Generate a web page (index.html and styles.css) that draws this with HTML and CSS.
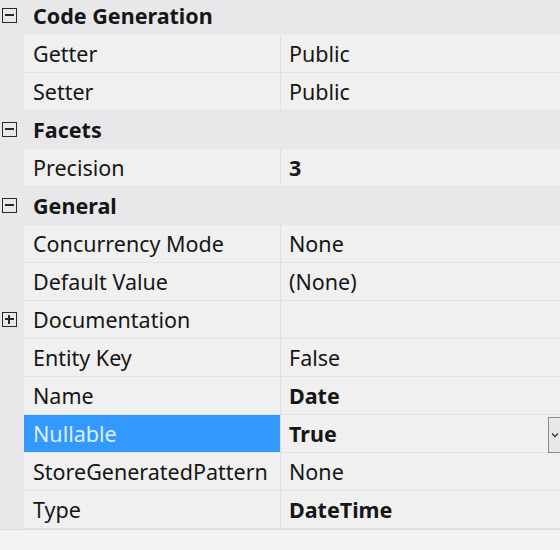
FILE: index.html
```html
<!DOCTYPE html>
<html>
<head>
<meta charset="utf-8">
<link rel="stylesheet" href="styles.css">
</head>
<body>
<div class="grid">
  <div class="row cat"><span class="gut"><span class="box"></span></span><span class="cat-label">Code Generation</span></div>
  <div class="row"><span class="gut"></span><span class="name">Getter</span><span class="val">Public</span></div>
  <div class="row"><span class="gut"></span><span class="name">Setter</span><span class="val">Public</span></div>
  <div class="row cat"><span class="gut"><span class="box"></span></span><span class="cat-label">Facets</span></div>
  <div class="row"><span class="gut"></span><span class="name">Precision</span><span class="val bold">3</span></div>
  <div class="row cat"><span class="gut"><span class="box"></span></span><span class="cat-label">General</span></div>
  <div class="row"><span class="gut"></span><span class="name">Concurrency Mode</span><span class="val">None</span></div>
  <div class="row"><span class="gut"></span><span class="name">Default Value</span><span class="val">(None)</span></div>
  <div class="row"><span class="gut"><span class="box plus"></span></span><span class="name">Documentation</span><span class="val"></span></div>
  <div class="row"><span class="gut"></span><span class="name">Entity Key</span><span class="val">False</span></div>
  <div class="row"><span class="gut"></span><span class="name">Name</span><span class="val bold">Date</span></div>
  <div class="row selected"><span class="gut"></span><span class="name">Nullable</span><span class="val bold">True</span><span class="drop"><svg width="12" height="10" viewBox="0 0 12 10"><path d="M3 3.5 L6 6.5 L9 3.5" fill="none" stroke="#333" stroke-width="1.3"/></svg></span></div>
  <div class="row"><span class="gut"></span><span class="name">StoreGeneratedPattern</span><span class="val">None</span></div>
  <div class="row"><span class="gut"></span><span class="name">Type</span><span class="val bold">DateTime</span></div>
</div>
</body>
</html>
```
FILE: styles.css
```css
html, body {
  margin: 0;
  padding: 0;
  background: #f3f3f4;
}
body {
  width: 560px;
  height: 550px;
  overflow: hidden;
  font-family: "Noto Sans", "Open Sans", sans-serif;
  font-size: 21.5px;
  color: #161616;
}
.grid {
  margin-top: -3px;
  border-bottom: 1px solid #dcdcdf;
}
.row {
  height: 38px;
  display: flex;
  align-items: stretch;
  position: relative;
  background: #f0f0f1;
}
.gut {
  width: 24px;
  flex: none;
  background: #e8e8eb;
  display: flex;
  align-items: center;
}
.cat {
  background: #e8e8eb;
}
.cat-label {
  font-weight: bold;
  padding-left: 9px;
  padding-bottom: 2px;
  display: flex;
  align-items: center;
}
.box {
  width: 15px;
  height: 15px;
  border: 1.5px solid #2a2a2a;
  box-sizing: border-box;
  margin-left: 2px;
  margin-bottom: 1px;
  position: relative;
  flex: none;
}
.box::before {
  content: "";
  position: absolute;
  left: 2px;
  right: 2px;
  top: 5px;
  height: 1.5px;
  background: #2a2a2a;
}
.plus::after {
  content: "";
  position: absolute;
  top: 2px;
  bottom: 2px;
  left: 5px;
  width: 1.5px;
  background: #2a2a2a;
}
.row:not(.cat) .name,
.row:not(.cat) .val {
  box-shadow: inset 0 -1px 0 #e3e3e5;
}
.name {
  width: 257px;
  flex: none;
  box-sizing: border-box;
  padding-left: 9px;
  padding-bottom: 2px;
  display: flex;
  align-items: center;
  border-right: 1px solid #e1e1e4;
  white-space: nowrap;
}
.val {
  flex: 1;
  padding-left: 8px;
  padding-bottom: 2px;
  white-space: nowrap;
  display: flex;
  align-items: center;
}
.bold {
  font-weight: bold;
}
.selected .name {
  background: #3399ff;
  color: #dcefff;
}
.drop {
  position: absolute;
  left: 548px;
  top: 2px;
  width: 14px;
  height: 34px;
  border: 1px solid #8a8a8a;
  background: #e8e8e8;
  display: flex;
  align-items: center;
  overflow: hidden;
}
```
